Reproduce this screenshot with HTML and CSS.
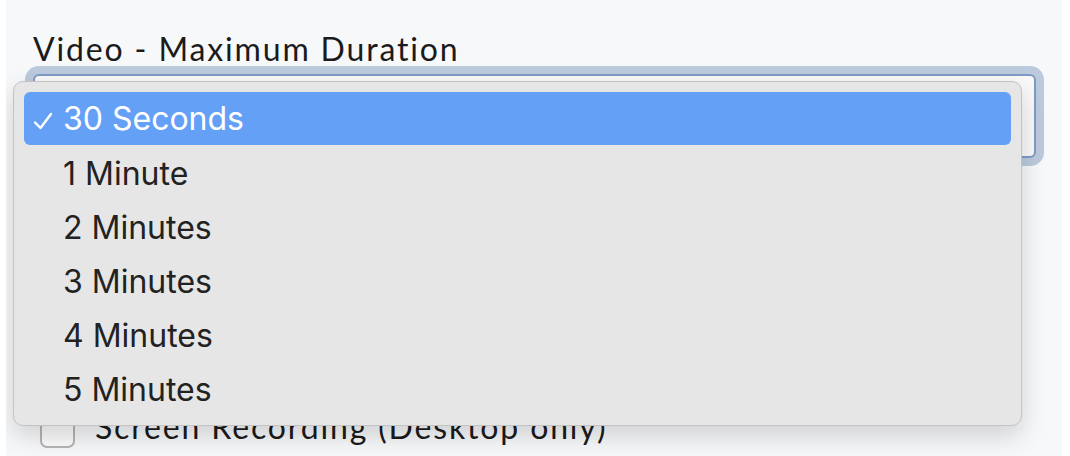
FILE: index.html
```html
<!DOCTYPE html>
<html>
<head>
<meta charset="utf-8">
<link rel="stylesheet" href="styles.css">
</head>
<body>
<div class="page">
  <div class="field">
    <label class="label">Video - Maximum Duration</label>
    <div class="select"></div>
  </div>
  <div class="check-row">
    <span class="checkbox"></span>
    <span class="check-text">Screen Recording (Desktop only)</span>
  </div>
  <div class="menu">
    <div class="opt selected">
      <svg class="tick" viewBox="0 0 20 20" width="20" height="20"><path d="M2 11.5 L7.5 17 L18 3" fill="none" stroke="#fff" stroke-width="2.4" stroke-linecap="round" stroke-linejoin="round"/></svg>
      <span>30 Seconds</span>
    </div>
    <div class="opt"><span>1 Minute</span></div>
    <div class="opt"><span>2 Minutes</span></div>
    <div class="opt"><span>3 Minutes</span></div>
    <div class="opt"><span>4 Minutes</span></div>
    <div class="opt"><span>5 Minutes</span></div>
  </div>
</div>
</body>
</html>
```
FILE: styles.css
```css
html, body {
  margin: 0;
  padding: 0;
  background: #ffffff;
}
.page {
  position: relative;
  margin: 0 8px 0 6px;
  height: 456px;
  background: #f7f8fa;
  padding: 29px 0 0 27px;
  box-sizing: border-box;
  overflow: hidden;
  font-family: "Lato", "Open Sans", sans-serif;
  color: #1b1b1b;
}
.field {
  display: flex;
  flex-direction: column;
}
.label {
  font-size: 32px;
  letter-spacing: 1.85px;
  line-height: 40px;
}
.select {
  margin-top: 5px;
  width: 1003px;
  height: 84px;
  box-sizing: border-box;
  border: 2px solid #7f9bc4;
  border-radius: 6px;
  background: #f9f9fa;
  box-shadow: 0 0 0 8px #bccadd;
}
.check-row {
  display: flex;
  align-items: flex-end;
  margin-top: 249px;
  margin-left: 7px;
  gap: 20px;
}
.checkbox {
  width: 35px;
  height: 34px;
  box-sizing: border-box;
  border: 2px solid #b5b5b5;
  border-radius: 7px;
  background: #fbfbfb;
  margin-bottom: -1px;
}
.check-text {
  font-size: 32px;
  letter-spacing: 1.85px;
  line-height: 40px;
}
.menu {
  position: absolute;
  left: 7px;
  top: 81px;
  width: 1009px;
  height: 345px;
  box-sizing: border-box;
  padding: 10px 10px 9px 10px;
  background: #e6e6e6;
  border: 1px solid #c3c3c3;
  border-radius: 10px;
  box-shadow: 0 10px 26px rgba(0, 0, 0, 0.16);
  font-family: "Inter", "Noto Sans", sans-serif;
  font-size: 32px;
  color: #222222;
  display: flex;
  flex-direction: column;
}
.opt {
  height: 54px;
  display: flex;
  align-items: center;
  padding-left: 39px;
  position: relative;
  border-radius: 6px;
}
.opt.selected {
  background: #65a0f7;
  color: #ffffff;
  height: 53px;
  margin-bottom: 1px;
}
.tick {
  position: absolute;
  left: 9px;
  top: 19px;
}
```
